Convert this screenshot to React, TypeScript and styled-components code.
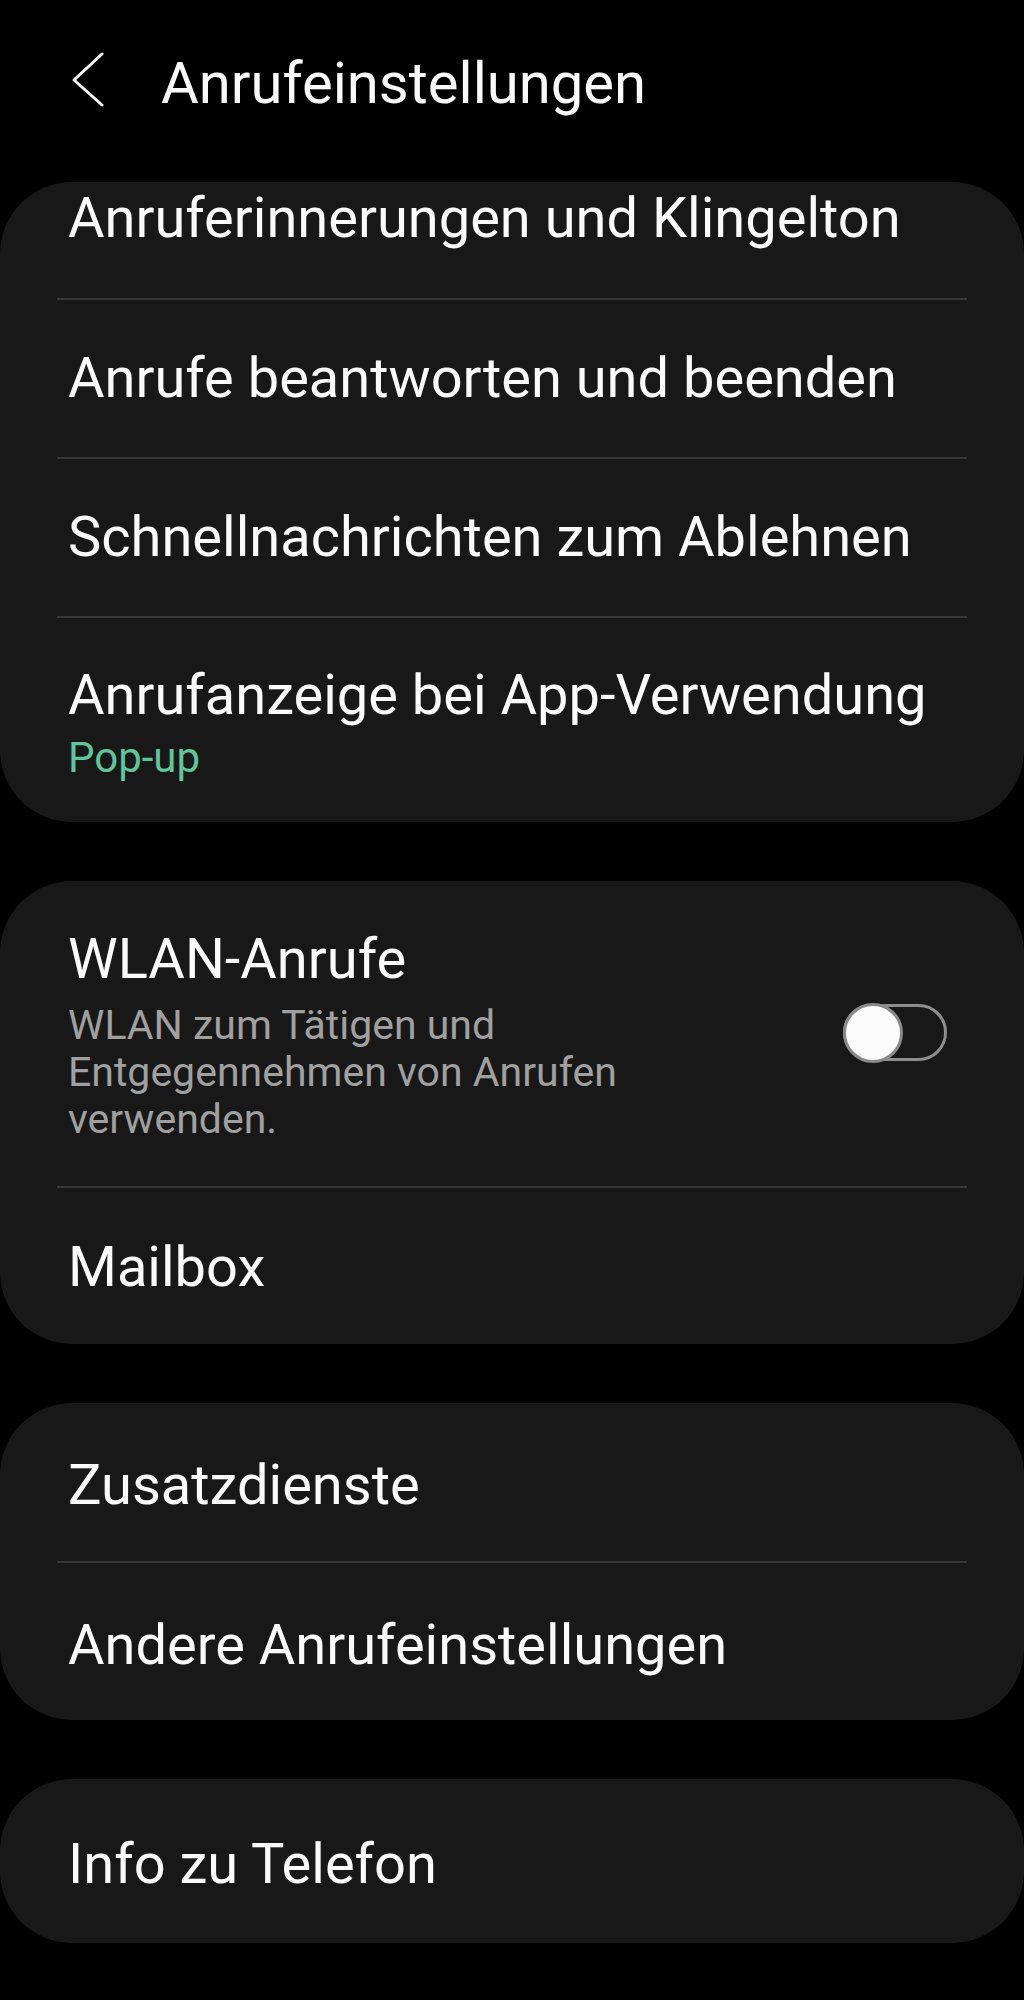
import React from "react";
import styled, { createGlobalStyle } from "styled-components";

const Global = createGlobalStyle`
  html, body {
    margin: 0;
    padding: 0;
    background: #000;
  }
  body {
    font-family: Roboto, "Noto Sans", "Liberation Sans", sans-serif;
    color: #fafafa;
    -webkit-font-smoothing: antialiased;
  }
`;

const Screen = styled.div`
  width: 1024px;
  min-height: 2000px;
  background: #000;
  display: flex;
  flex-direction: column;
`;

const Header = styled.header`
  height: 166px;
  display: flex;
  align-items: center;
  padding-left: 72px;
  box-sizing: border-box;
`;

const BackButton = styled.button`
  width: 32px;
  height: 56px;
  padding: 0;
  margin: 0 57px 6px 0;
  border: none;
  background: transparent;
  display: flex;
  align-items: center;
  justify-content: center;
  cursor: pointer;
`;

const HeaderTitle = styled.h1`
  margin: 0;
  font-size: 58px;
  line-height: 68px;
  font-weight: 400;
  color: #fafafa;
  letter-spacing: 0;
`;

const List = styled.main`
  display: flex;
  flex-direction: column;
  gap: 59px;
  padding-top: 16px;
`;

const Card = styled.section`
  background: #181818;
  border-radius: 72px;
  overflow: hidden;
  display: flex;
  flex-direction: column;
`;

const Row = styled.div<{ $h?: number; $scrolled?: number; $shift?: number }>`
  min-height: ${(p) => p.$h ?? 157}px;
  margin-top: ${(p) => (p.$scrolled ? -p.$scrolled : 0)}px;
  box-sizing: border-box;
  padding: ${(p) => p.$shift ?? 0}px 68px 0 68px;
  display: flex;
  align-items: center;
`;

const StackRow = styled.div<{ $pt: number; $pb: number }>`
  box-sizing: border-box;
  padding: ${(p) => p.$pt}px 77px ${(p) => p.$pb}px 68px;
  display: flex;
  align-items: center;
  justify-content: space-between;
  gap: 24px;
`;

const TextCol = styled.div`
  display: flex;
  flex-direction: column;
  min-width: 0;
`;

const Title = styled.div`
  font-size: 56px;
  line-height: 67px;
  font-weight: 400;
  color: #fafafa;
  white-space: nowrap;
`;

const Summary = styled.div`
  font-size: 42px;
  line-height: 48px;
  color: #62c49a;
  margin-top: 5px;
`;

const Description = styled.div`
  font-size: 41px;
  line-height: 47px;
  color: #a0a0a0;
  margin-top: 9px;
  max-width: 600px;
`;

const Divider = styled.hr`
  margin: 0 57px;
  border: none;
  height: 2px;
  background: #363636;
  flex-shrink: 0;
`;

const SwitchTrack = styled.div`
  position: relative;
  width: 104px;
  height: 57px;
  box-sizing: border-box;
  border: 3px solid #8d8d8d;
  border-radius: 29px;
  flex-shrink: 0;
  margin-top: -4px;
`;

const SwitchKnob = styled.span`
  position: absolute;
  left: -3px;
  top: -4.5px;
  width: 60px;
  height: 60px;
  box-sizing: border-box;
  border-radius: 50%;
  background: #fbfbfb;
  border: 3px solid #8a8a8a;
`;

const Chevron = () => (
  <svg width="32" height="56" viewBox="0 0 32 56" fill="none">
    <polyline
      points="30,2 2,28 30,53"
      stroke="#fafafa"
      strokeWidth="3"
      strokeLinecap="round"
      strokeLinejoin="round"
    />
  </svg>
);

export default function App() {
  return (
    <>
      <Global />
      <Screen>
        <Header>
          <BackButton aria-label="Zurück">
            <Chevron />
          </BackButton>
          <HeaderTitle>Anrufeinstellungen</HeaderTitle>
        </Header>
        <List>
          <Card>
            <Row $h={159} $scrolled={43}>
              <Title>Anruferinnerungen und Klingelton</Title>
            </Row>
            <Divider />
            <Row>
              <Title>Anrufe beantworten und beenden</Title>
            </Row>
            <Divider />
            <Row>
              <Title>Schnellnachrichten zum Ablehnen</Title>
            </Row>
            <Divider />
            <StackRow $pt={44} $pb={40}>
              <TextCol>
                <Title>Anrufanzeige bei App-Verwendung</Title>
                <Summary>Pop-up</Summary>
              </TextCol>
            </StackRow>
          </Card>

          <Card>
            <StackRow $pt={45} $pb={43}>
              <TextCol>
                <Title>WLAN-Anrufe</Title>
                <Description>
                  WLAN zum Tätigen und Entgegennehmen von Anrufen verwenden.
                </Description>
              </TextCol>
              <SwitchTrack role="switch" aria-checked="false">
                <SwitchKnob />
              </SwitchTrack>
            </StackRow>
            <Divider />
            <Row $h={156} $shift={2}>
              <Title>Mailbox</Title>
            </Row>
          </Card>

          <Card>
            <Row $h={158} $shift={6}>
              <Title>Zusatzdienste</Title>
            </Row>
            <Divider />
            <Row $shift={7}>
              <Title>Andere Anrufeinstellungen</Title>
            </Row>
          </Card>

          <Card>
            <Row $h={164} $shift={6}>
              <Title>Info zu Telefon</Title>
            </Row>
          </Card>
        </List>
      </Screen>
    </>
  );
}
